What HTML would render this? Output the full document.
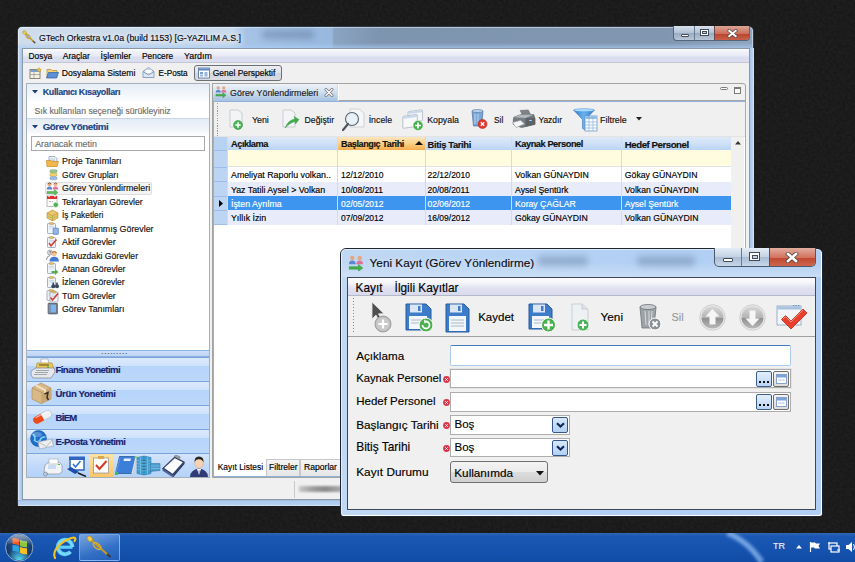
<!DOCTYPE html>
<html><head><meta charset="utf-8">
<style>
*{margin:0;padding:0;box-sizing:border-box}
html,body{width:855px;height:562px;overflow:hidden}
body{background:#151515;font-family:"Liberation Sans",sans-serif;font-size:8.7px;color:#000;position:relative}
.a{position:absolute}
.t{position:absolute;white-space:nowrap;line-height:1;-webkit-text-stroke:0.15px currentColor}
</style></head><body>
<svg class="a" style="left:0;top:0" width="855" height="533"><filter id="nz" x="0" y="0" width="100%" height="100%"><feTurbulence type="fractalNoise" baseFrequency="0.35" numOctaves="2" seed="3"/><feColorMatrix type="matrix" values="0 0 0 0 0.5  0 0 0 0 0.5  0 0 0 0 0.5  0 0 0 .08 0"/></filter><rect width="855" height="533" filter="url(#nz)"/></svg>
<!-- ============ MAIN WINDOW ============ -->
<div class="a" style="left:17px;top:26px;width:737px;height:480px;border-radius:5px 5px 2px 2px;border:1px solid #2e3846;background:linear-gradient(90deg,#cfdcea 0px,#c8d9ec 215px,#a6c3e6 228px,#98b8de 314px,#8aa4c2 316px,#7e95b0 360px,#8197b1 650px,#90a6bf 737px)"></div>
<div class="a" style="left:18px;top:27px;width:735px;height:478px;border-radius:4px 4px 1px 1px;border:1px solid rgba(255,255,255,.45);border-bottom-color:rgba(255,255,255,.8)"></div>
<div class="a" style="left:18px;top:43px;width:735px;height:5px;background:linear-gradient(180deg,rgba(170,205,245,0),rgba(170,205,245,.65))"></div>
<div class="a" style="left:18px;top:48px;width:5px;height:457px;background:linear-gradient(90deg,#e6effa,#b6d1f1 35%,#a7c6ed 80%,#9ab6da)"></div>
<div class="a" style="left:749px;top:48px;width:5px;height:457px;background:linear-gradient(90deg,#8ea9cc,#a7c4ea 25%,#b6d1f1 70%,#dfeaf7)"></div>
<div class="a" style="left:18px;top:500px;width:736px;height:5.5px;background:linear-gradient(180deg,#9ab6da,#b2cff1 30%,#aecbf0 70%,#dfeaf7)"></div>
<div class="a" style="left:262px;top:30px;width:52px;height:9px;background:rgba(40,60,90,.25);filter:blur(3px);border-radius:4px"></div>
<!-- title icon: trumpet -->
<svg class="a" style="left:22px;top:30px" width="14" height="14" viewBox="0 0 14 14"><path d="M2.5 2.5L11.5 11.5" stroke="#c49a20" stroke-width="1.5"/><ellipse cx="6" cy="6.5" rx="2.6" ry="1.5" transform="rotate(45 6 6.5)" fill="#9ca8d8" stroke="#d2a92c" stroke-width="1"/><ellipse cx="2.6" cy="2.6" rx="2" ry="1.6" transform="rotate(45 2.6 2.6)" fill="#f0cf48" stroke="#a88418" stroke-width=".5"/><path d="M11 11l2.3 2.3" stroke="#555" stroke-width="1.6"/></svg>
<div class="t" style="left:39px;top:33.5px;font-size:8.75px;color:#0b0b14;text-shadow:0 0 4px #fff,0 0 7px rgba(255,255,255,.8)">GTech Orkestra v1.0a (build 1153) [G-YAZILIM A.S.]</div>
<!-- caption buttons -->
<div class="a" style="left:673px;top:26px;width:77px;height:15px;border:1px solid #55657a;border-top:none;border-radius:0 0 4px 4px;overflow:hidden;background:linear-gradient(180deg,#d8e2ee,#b2c1d3 50%,#9aaabf 51%,#b8c6d8)">
  <div class="a" style="left:20px;top:0;width:1px;height:15px;background:#6a7a90"></div>
  <div class="a" style="left:40px;top:0;width:37px;height:15px;background:linear-gradient(180deg,#dba597,#cd6f5c 50%,#b9432c 51%,#c9654e)"></div>
  <div class="a" style="left:40px;top:0;width:1px;height:15px;background:#6a4a48"></div>
</div>
<div class="a" style="left:681px;top:34px;width:8px;height:3px;background:#fff;border:1px solid #414b5a;border-radius:1px"></div>
<div class="a" style="left:700px;top:29px;width:9px;height:7px;border:1px solid #414b5a;background:#fff"></div>
<div class="a" style="left:702px;top:31px;width:5px;height:3px;border:1px solid #414b5a;background:#c9d3df"></div>
<svg class="a" style="left:727px;top:29px" width="11" height="9" viewBox="0 0 11 9"><path d="M2.3 1.8 L8.7 7.2 M8.7 1.8 L2.3 7.2" stroke="#5a4a48" stroke-width="3.4" stroke-linecap="square"/><path d="M2.3 1.8 L8.7 7.2 M8.7 1.8 L2.3 7.2" stroke="#fff" stroke-width="2" stroke-linecap="square"/></svg>

<!-- client -->
<div class="a" style="left:22px;top:48px;width:728px;height:452px;background:#f0f0f0;border:1px solid #8b98a8"></div>
<!-- menubar -->
<div class="a" style="left:23px;top:49px;width:726px;height:13.5px;background:linear-gradient(180deg,#ffffff 0,#f1f3f9 15%,#e9ecf6 45%,#dadeef 60%,#dadef0 100%)"></div>
<div class="a" style="left:23px;top:62px;width:726px;height:1px;background:#c3c7d3"></div>
<div class="t" style="left:28.5px;top:52.2px;font-size:8.4px">Dosya</div>
<div class="t" style="left:62.7px;top:52.2px;font-size:8.6px">Araçlar</div>
<div class="t" style="left:100.5px;top:52.2px;font-size:8.8px">İşlemler</div>
<div class="t" style="left:142px;top:52.2px;font-size:8.4px">Pencere</div>
<div class="t" style="left:184px;top:52.2px;font-size:8.85px">Yardım</div>

<!-- toolbar -->
<svg class="a" style="left:29px;top:67px" width="13" height="13" viewBox="0 0 13 13"><rect x="1" y="2.5" width="10" height="9" fill="#f4f1e6" stroke="#6f6a5c" stroke-width=".8"/><rect x="1.5" y="3" width="9" height="2" fill="#7a9ed4"/><path d="M1 7.5h10M5 5v6.5" stroke="#8a846f" stroke-width=".6"/><path d="M10 0.5l.7 1.6 1.6.2-1.2 1 .4 1.6-1.5-.9-1.5.9.4-1.6-1.2-1 1.6-.2z" fill="#f2c94c" stroke="#b88a10" stroke-width=".4"/></svg>
<svg class="a" style="left:46px;top:67px" width="13" height="12" viewBox="0 0 13 12"><path d="M1 2.5h4l1 1h5v7H1z" fill="#f3d27a" stroke="#b88d2a" stroke-width=".7"/><path d="M2.5 5.5h10l-2 5.5H0.5z" fill="#5b8fd8" stroke="#2f5fa8" stroke-width=".7"/></svg>
<div class="t" style="left:61.8px;top:69.3px;font-size:8.6px">Dosyalama Sistemi</div>
<svg class="a" style="left:142px;top:66px" width="13" height="13" viewBox="0 0 13 13"><path d="M1 5.5 L6.5 1.5 L12 5.5 V11.5 H1Z" fill="#dfe9f5" stroke="#6f8fb8" stroke-width=".8"/><rect x="3" y="3.5" width="7" height="4" fill="#fff" stroke="#9ab" stroke-width=".4"/><path d="M1 5.5 L6.5 9 L12 5.5" fill="none" stroke="#6f8fb8" stroke-width=".8"/></svg>
<div class="t" style="left:158.5px;top:69.9px;font-size:8.21px">E-Posta</div>
<div class="a" style="left:194px;top:65px;width:88px;height:16px;border:1px solid #6b6f76;border-radius:3px;background:linear-gradient(180deg,#eceef2,#dfe2e8 50%,#d2d6dd 51%,#d9dce2)"></div>
<svg class="a" style="left:198px;top:67px" width="12" height="12" viewBox="0 0 12 12"><rect x=".5" y="1" width="11" height="10" fill="#fff" stroke="#4b6a9a" stroke-width=".8"/><rect x="1" y="1.5" width="10" height="2" fill="#5a86c8"/><rect x="2" y="5" width="3" height="2" fill="#7ba0d6"/><rect x="6.5" y="5" width="3" height="4.5" fill="#9bb6de"/><rect x="2" y="7.5" width="3" height="2" fill="#9bb6de"/></svg>
<div class="t" style="left:212.7px;top:69.3px;font-size:8.48px">Genel Perspektif</div>
<!-- ============ LEFT PANEL ============ -->
<div class="a" style="left:26px;top:83px;width:184px;height:395px;background:#fff;border:1px solid #a7afb9"></div>
<div class="a" style="left:27px;top:84px;width:182px;height:19px;background:linear-gradient(180deg,#e6edf6,#f6f9fc 70%,#fff)"></div>
<svg class="a" style="left:32px;top:90px" width="6" height="4" viewBox="0 0 6 4"><path d="M0 0H6L3 3.5Z" fill="#1d3d73"/></svg>
<div class="t" style="left:42.7px;top:88.11px;font-size:8.965px;letter-spacing:-0.367px;font-weight:bold;color:#1d4586">Kullanıcı Kısayolları</div>
<div class="t" style="left:34.5px;top:106.6px;font-size:8.67px;color:#6e6e6e">Sık kullanılan seçeneği sürükleyiniz</div>
<div class="a" style="left:27px;top:118px;width:182px;height:1px;background:#c7d5e6"></div>
<div class="a" style="left:27px;top:119px;width:182px;height:17px;background:linear-gradient(180deg,#e3ebf5,#f3f6fb 70%,#fff)"></div>
<svg class="a" style="left:32px;top:125px" width="6" height="4" viewBox="0 0 6 4"><path d="M0 0H6L3 3.5Z" fill="#1d3d73"/></svg>
<div class="t" style="left:42.7px;top:121.85px;font-size:9.790px;letter-spacing:-0.469px;font-weight:bold;color:#1d4586">Görev Yönetimi</div>
<div class="a" style="left:31px;top:136px;width:174px;height:15px;background:#fff;border:1px solid #a9a9a9"></div>
<div class="t" style="left:35.2px;top:140px;font-size:8.9px;color:#6d6d6d">Aranacak metin</div>

<!-- selected tree item -->
<div class="a" style="left:45px;top:181.5px;width:107px;height:13px;background:#f3f3f3;border:1px solid #dedede;border-radius:2px"></div>
<div class="t" style="left:62px;top:157.4px;font-size:8.9px;color:#111">Proje Tanımları</div>
<div class="t" style="left:62px;top:170.8px;font-size:8.56px;color:#111">Görev Grupları</div>
<div class="t" style="left:62px;top:184.2px;font-size:8.88px;color:#111">Görev Yönlendirmeleri</div>
<div class="t" style="left:62px;top:197.7px;font-size:8.7px;color:#111">Tekrarlayan Görevler</div>
<div class="t" style="left:62px;top:211.1px;font-size:8.37px;color:#111">İş Paketleri</div>
<div class="t" style="left:62px;top:224.6px;font-size:8.87px;color:#111">Tamamlanmış Görevler</div>
<div class="t" style="left:62px;top:238.0px;font-size:8.88px;color:#111">Aktif Görevler</div>
<div class="t" style="left:62px;top:251.5px;font-size:8.66px;color:#111">Havuzdaki Görevler</div>
<div class="t" style="left:62px;top:264.9px;font-size:8.73px;color:#111">Atanan Görevler</div>
<div class="t" style="left:62px;top:278.4px;font-size:8.55px;color:#111">İzlenen Görevler</div>
<div class="t" style="left:62px;top:291.8px;font-size:8.8px;color:#111">Tüm Görevler</div>
<div class="t" style="left:62px;top:305.3px;font-size:8.81px;color:#111">Görev Tanımları</div>

<!-- tree icons -->
<svg class="a" style="left:46px;top:155px" width="13" height="12" viewBox="0 0 13 12"><path d="M3 1.5h6l2 2v5H3z" fill="#eef2f7" stroke="#7f93ad" stroke-width=".7"/><path d="M4 4h5M4 5.5h5" stroke="#9fb0c6" stroke-width=".6"/><path d="M0.5 5.5h4l1 1h7l-1.5 5h-10z" fill="#f2b84b" stroke="#c98a1c" stroke-width=".7"/></svg>
<svg class="a" style="left:48.5px;top:169px" width="9" height="12" viewBox="0 0 9 12"><rect x="1" y="0.8" width="7" height="3" rx="1.2" fill="#9cc78a" stroke="#6f9a5e" stroke-width=".5"/><rect x="1" y="4.3" width="7" height="3" rx="1.2" fill="#f0d273" stroke="#b89a3a" stroke-width=".5"/><rect x="1" y="7.8" width="7" height="3" rx="1.2" fill="#9fbde6" stroke="#6d8fbf" stroke-width=".5"/></svg>
<svg class="a" style="left:46px;top:182px" width="13" height="13" viewBox="0 0 13 13"><circle cx="3.5" cy="2.5" r="1.8" fill="#e6a77e"/><path d="M1.7 1.8q1.8-1.8 3.6 0" stroke="#7a4a2a" stroke-width=".9" fill="none"/><path d="M0.8 7.5q0-3 2.7-3t2.7 3z" fill="#5c86d4"/><circle cx="9.5" cy="2.5" r="1.8" fill="#f0b090"/><path d="M7.7 1.8q1.8-1.8 3.6 0" stroke="#9a5a3a" stroke-width=".9" fill="none"/><path d="M6.8 7.5q0-3 2.7-3t2.7 3z" fill="#e2719a"/><path d="M1 9.5h7.5v-1.8l3.5 2.8-3.5 2.8v-1.8H1z" fill="#5cbc5a" stroke="#2e8a33" stroke-width=".4"/></svg>
<svg class="a" style="left:46px;top:195px" width="13" height="13" viewBox="0 0 13 13"><rect x="1" y="1" width="10" height="10.5" fill="#fff" stroke="#8a8a8a" stroke-width=".6"/><rect x="1" y="1" width="10" height="3" fill="#e0312e"/><rect x="2.5" y=".3" width="1.2" height="1.8" fill="#fff"/><rect x="8.3" y=".3" width="1.2" height="1.8" fill="#fff"/><path d="M3 6.5h2M6 6.5h1" stroke="#aaa" stroke-width=".8"/><circle cx="9.8" cy="9.8" r="2.6" fill="#4bb04f" stroke="#fff" stroke-width=".6"/></svg>
<svg class="a" style="left:45.5px;top:209px" width="13" height="12" viewBox="0 0 13 12"><path d="M1 4l5.5-3 5.5 3v5l-5.5 3-5.5-3z" fill="#e8c66a" stroke="#b68c2c" stroke-width=".6"/><path d="M1 4l5.5 3 5.5-3M6.5 7v5" stroke="#b68c2c" stroke-width=".6" fill="none"/><path d="M1 6.5l5.5 3 5.5-3" stroke="#9fc05a" stroke-width="1" fill="none"/></svg>
<svg class="a" style="left:46px;top:222px" width="13" height="13" viewBox="0 0 13 13"><rect x="1.5" y="1.5" width="8" height="10" rx=".8" fill="#eef4fb" stroke="#7f93ad" stroke-width=".7"/><rect x="3.5" y=".6" width="4" height="2" rx=".5" fill="#e3c06a" stroke="#a9883a" stroke-width=".4"/><path d="M3 4.5h5M3 6h5" stroke="#b6c6da" stroke-width=".6"/><rect x="7" y="6" width="5.5" height="6.5" rx="1" fill="#86acdf" stroke="#4c77b8" stroke-width=".5"/><path d="M8 8h3.5M8 10h3.5" stroke="#c8dcf4" stroke-width=".5"/></svg>
<svg class="a" style="left:46px;top:236px" width="13" height="12" viewBox="0 0 13 12"><rect x="1.5" y="1.5" width="8" height="10" rx=".8" fill="#eef4fb" stroke="#7f93ad" stroke-width=".7"/><rect x="3.5" y=".6" width="4" height="2" rx=".5" fill="#e3c06a" stroke="#a9883a" stroke-width=".4"/><path d="M3 4.5h5M3 6h5" stroke="#b6c6da" stroke-width=".6"/><path d="M3 7l2 2.8 5.5-6.3" stroke="#d63a2a" stroke-width="1.5" fill="none"/></svg>
<svg class="a" style="left:45.5px;top:249px" width="13" height="13" viewBox="0 0 13 13"><circle cx="4" cy="3.5" r="2.6" fill="#d6d9de" stroke="#7b8087" stroke-width=".5"/><path d="M3.2 2.6q.8-.9 1.6 0q0 .9-.8 1.2v.6" stroke="#555" stroke-width=".6" fill="none"/><path d="M0.5 11q0-4 3.5-4.5" stroke="#8b9097" stroke-width="1" fill="none"/><circle cx="8.2" cy="5" r="2.4" fill="#f3c29a"/><path d="M5.8 4.2q2.4-3 4.8 0" stroke="#c8722a" stroke-width="1.2" fill="none"/><path d="M3.5 12.5q0-4.8 4.7-4.8t4.7 4.8z" fill="#3f7bd4"/></svg>
<svg class="a" style="left:46px;top:262px" width="13" height="13" viewBox="0 0 13 13"><rect x="1.5" y="1.5" width="8" height="10" rx=".8" fill="#eef4fb" stroke="#7f93ad" stroke-width=".7"/><rect x="3.5" y=".6" width="4" height="2" rx=".5" fill="#e3c06a" stroke="#a9883a" stroke-width=".4"/><path d="M3 4.5h5M3 6h5" stroke="#b6c6da" stroke-width=".6"/><path d="M5.5 9h3.5v-2l3.5 3-3.5 3v-2H5.5z" fill="#52b04e"/></svg>
<svg class="a" style="left:46px;top:276px" width="13" height="13" viewBox="0 0 13 13"><rect x="1.5" y="1.5" width="8" height="10" rx=".8" fill="#eef4fb" stroke="#7f93ad" stroke-width=".7"/><rect x="3.5" y=".6" width="4" height="2" rx=".5" fill="#e3c06a" stroke="#a9883a" stroke-width=".4"/><path d="M3 4.5h5M3 6h5" stroke="#b6c6da" stroke-width=".6"/><circle cx="7.3" cy="10.3" r="2" fill="#3b4a5c"/><circle cx="11" cy="10.3" r="2" fill="#3b4a5c"/><rect x="6.5" y="6.5" width="1.6" height="3.5" fill="#3b4a5c"/><rect x="10.2" y="6.5" width="1.6" height="3.5" fill="#3b4a5c"/></svg>
<svg class="a" style="left:46px;top:289px" width="13" height="13" viewBox="0 0 13 13"><g transform="translate(-.5 0)"><rect x="1.5" y="1.5" width="8" height="10" rx=".8" fill="#eef4fb" stroke="#7f93ad" stroke-width=".7"/><rect x="3.5" y=".6" width="4" height="2" rx=".5" fill="#e3c06a" stroke="#a9883a" stroke-width=".4"/><path d="M3 4.5h5M3 6h5" stroke="#b6c6da" stroke-width=".6"/></g><g transform="translate(2.5 1.5)"><rect x="1.5" y="1.5" width="8" height="10" rx=".8" fill="#eef4fb" stroke="#7f93ad" stroke-width=".7"/><rect x="3.5" y=".6" width="4" height="2" rx=".5" fill="#e3c06a" stroke="#a9883a" stroke-width=".4"/><path d="M3 4.5h5M3 6h5" stroke="#b6c6da" stroke-width=".6"/></g><path d="M4.5 8.5l2 2.5 5.5-6.5" stroke="#d63a2a" stroke-width="1.5" fill="none"/></svg>
<svg class="a" style="left:46.5px;top:302px" width="12" height="13" viewBox="0 0 12 13"><rect x="1" y="1" width="9.5" height="11" rx="1" fill="#6f7a88" stroke="#4a5360" stroke-width=".6"/><rect x="3.5" y="2.5" width="5.5" height="8" rx=".5" fill="#7fb2ee"/><path d="M2.2 2v9" stroke="#9aa3ae" stroke-width=".8"/></svg>

<!-- splitter + bands -->
<div class="a" style="left:27px;top:350px;width:182px;height:7px;background:linear-gradient(180deg,#8fb1df 0,#8fb1df 1px,#cfe0f6 1px,#bcd4f3 6px,#8fb1df 6px)"></div>
<div class="t" style="left:101px;top:350px;font-size:8px;letter-spacing:0.3px;color:#4a5c78">·········</div>
<div class="a" style="left:27px;top:357px;width:182px;height:121px;background:repeating-linear-gradient(180deg,#7aa3dc 0px,#7aa3dc 1px,#dbe9fb 1px,#cfe2fb 9px,#b6d5fb 9px,#bcd8fa 24px)"></div>
<div class="a" style="left:27px;top:453px;width:182px;height:24px;background:linear-gradient(180deg,#7aa3dc 0,#7aa3dc 1px,#d4e5fa 1px,#c2dafa 12px,#b4d2f8 24px)"></div>
<div class="a" style="left:26px;top:477px;width:184px;height:1px;background:#a7afb9"></div>
<div class="t" style="left:55.5px;top:365.2px;font-size:9.6px;letter-spacing:-0.577px;font-weight:bold;color:#1a2470">Finans Yonetimi</div>
<div class="t" style="left:55.5px;top:389.2px;font-size:9.6px;letter-spacing:-0.355px;font-weight:bold;color:#1a2470">Ürün Yonetimi</div>
<div class="t" style="left:55.5px;top:413.3px;font-size:9.6px;letter-spacing:-0.72px;font-weight:bold;color:#1a2470">BİEM</div>
<div class="t" style="left:55.5px;top:437.3px;font-size:9.6px;letter-spacing:-0.548px;font-weight:bold;color:#1a2470">E-Posta Yönetimi</div>
<!-- band icons -->
<svg class="a" style="left:30px;top:358px" width="25" height="21" viewBox="0 0 25 21"><path d="M11 1h7l1 5h-8z" fill="#fafafa" stroke="#9a9a9a" stroke-width=".6"/><path d="M7 5h15l2 6H6z" fill="#e8c75a" stroke="#a98a2e" stroke-width=".6"/><path d="M9 7h10" stroke="#5a4a20" stroke-width="1"/><path d="M1 13l5-3h18l1 4-4 6H3l-2-3z" fill="#e6e8eb" stroke="#7b828a" stroke-width=".7"/><path d="M6 12.5h13M5 14.5h13M4 16.5h13" stroke="#8e959c" stroke-width=".8"/><rect x="17" y="8.5" width="2" height="1.2" fill="#3ca03c"/></svg>
<svg class="a" style="left:31px;top:382px" width="21" height="22" viewBox="0 0 21 22"><path d="M1 6l9-5 10 5v11l-10 4.5-9-4.5z" fill="#d9b985" stroke="#a88752" stroke-width=".6"/><path d="M1 6l10 4.5 9-4.5M11 10.5V21.5" stroke="#a88752" stroke-width=".6" fill="none"/><path d="M11 10.5l9-4.5v11l-9 4.5z" fill="#c9a672"/><path d="M5 3.5l9 4.5v3" stroke="#f1e1c2" stroke-width="2" fill="none"/><path d="M13.5 12l3.5-1.5-1 5 1.5 2.5" stroke="#3a3024" stroke-width="1.5" fill="none"/></svg>
<svg class="a" style="left:32px;top:409px" width="21" height="16" viewBox="0 0 21 16"><g transform="rotate(-28 10.5 8)"><rect x="0.5" y="4.3" width="20" height="7.4" rx="3.7" fill="#eef0f4" stroke="#aab0ba" stroke-width=".5"/><path d="M4.2 4.3h6.3v7.4H4.2a3.7 3.7 0 0 1 0-7.4z" fill="#ea4a1c"/><path d="M4 5.5h14" stroke="rgba(255,255,255,.6)" stroke-width="1.2"/></g></svg>
<svg class="a" style="left:30px;top:430px" width="24" height="21" viewBox="0 0 24 21"><circle cx="8.5" cy="8.5" r="8" fill="#1f6fc8"/><circle cx="8.5" cy="8.5" r="8" fill="none" stroke="#0e4a94" stroke-width=".5"/><path d="M3 4q3 3 1.5 6.5q3 2.5 5.5 0q1-4 5.5-3.5" stroke="#7fd0f8" stroke-width="1.6" fill="none"/><ellipse cx="7" cy="4.5" rx="5" ry="2.5" fill="rgba(255,255,255,.25)"/><path d="M8 12l14-3 1.5 7-14 3z" fill="#eceef1" stroke="#9aa0a8" stroke-width=".6"/><path d="M8 12l8.5 4.5 6.5-7.5" stroke="#9aa0a8" stroke-width=".6" fill="none"/></svg>
<!-- icon bar -->
<div class="a" style="left:90px;top:454px;width:23.5px;height:23px;background:linear-gradient(180deg,#fde3a4,#f9c66a)"></div>
<svg class="a" style="left:40px;top:455px" width="172" height="22" viewBox="0 0 172 22">
 <g transform="translate(1 0)"><path d="M4 10l4-3h10l3 3v7l-3 2H6l-3-2z" fill="#f1f3f6" stroke="#8e949c" stroke-width=".7"/><rect x="8" y="4" width="9" height="5" fill="#fff" stroke="#a3a9b0" stroke-width=".6"/><rect x="7" y="10" width="8" height="4" fill="#c9dcf3"/><rect x="17" y="9" width="2" height="1" fill="#3c3"/><circle cx="4.5" cy="19" r="2" fill="none" stroke="#7c8289" stroke-width=".7"/></g>
 <g transform="translate(27 0)"><path d="M3 3h14v12H3z" fill="#fff" stroke="#2c5eb2" stroke-width="1.4"/><rect x="2" y="1.5" width="16" height="3.5" fill="#2f66c4"/><path d="M6 9l2.5 3 5-6" stroke="#2f7ad8" stroke-width="1.6" fill="none"/><path d="M0 14l8 5 4-2-8-5z" fill="#1c4fa8"/><path d="M11 18l8 3.5" stroke="#1a1a1a" stroke-width="1.4"/></g>
 <g transform="translate(52 0)"><rect x="1.5" y="3" width="15" height="15" fill="#fff" stroke="#8a8a8a" stroke-width=".7"/><rect x="6" y="1" width="6" height="3" fill="#d8a94a"/><path d="M4 10l3.5 4 7-8" stroke="#d93a26" stroke-width="2" fill="none"/></g>
 <g><path d="M79.5 1.5H95.5L91.5 18.5H75.5z" fill="#3b7fd8" stroke="#1f4f9a" stroke-width=".7"/><path d="M95.5 1.5l1.2.8-4 16.9-1.2-.7z" fill="#f4f6f8" stroke="#9aa" stroke-width=".4"/><path d="M84 3.5h7l-.6 2.5h-7z" fill="#e8f0fa"/><path d="M80 3l-4 15" stroke="#6aa0e8" stroke-width=".8"/><rect x="75" y="17" width="3" height="3" fill="#3cc44a"/><rect x="94.5" y="1" width="2" height="2" fill="#7ad06a"/></g>
 <g><path d="M97 2.5l7-1.5 7 1.5v16l-7 1.5-7-1.5z" fill="#3f9fd4" stroke="#2a6f9a" stroke-width=".5"/><path d="M104 1v19" stroke="#2a78a8" stroke-width=".6"/><path d="M97 5.5l7 0.5 7-.5M97 8.5l7 .5 7-.5M97 11.5l7 .5 7-.5M97 14.5l7 .5 7-.5M100.5 2v17M107.5 2v17" stroke="#a6dcf4" stroke-width=".45"/><path d="M110.5 8.5h9.5v7l-9.5 1z" fill="#4a9ccc" stroke="#2a6f9a" stroke-width=".5"/><path d="M110.5 11h9.5M110.5 13.5h9.5" stroke="#a6dcf4" stroke-width=".45"/></g>
 <g><path d="M122.5 13.5L134.5 2 144.5 7 133 20.5z" fill="#34456e" stroke="#1c2436" stroke-width=".6"/><path d="M122.5 13.5v2.2L133 22.5v-2z" fill="#4c64a0"/><path d="M133 20.5v2L144.5 9v-2z" fill="#2b3a60"/><path d="M124.2 13L134.8 3.2l8 4.1-10.2 11.5z" fill="#fdfdfd"/><path d="M134 1.2l2.3-1.2 4 2-1.2 2.2z" fill="#9aa0a8" stroke="#555" stroke-width=".4"/></g>
 <g><path d="M150 22q0-7 9-8.5q9 1.5 9 8.5z" fill="#2f3a78"/><path d="M157 14l2 6 2-6z" fill="#fff"/><path d="M158.6 15.5l.4 5 .5-5z" fill="#3a3f55"/><ellipse cx="159" cy="8" rx="4.3" ry="5.2" fill="#f6d2b4" stroke="#c99a78" stroke-width=".4"/><path d="M154.6 7.5q-.5-6 4.4-6t4.6 6q-1-3-4.5-3.2t-4.5 3.2z" fill="#2a2420"/></g>
</svg>
<!-- ============ EDITOR PANEL ============ -->
<div class="a" style="left:212px;top:83px;width:534px;height:394.5px;background:#f0f0f0;border:1px solid #a3a3a3;border-radius:0 3px 0 0"></div>
<div class="a" style="left:337.5px;top:84px;width:407px;height:16.5px;border-left:1px solid #fff;border-bottom:1px solid #a8a8a8"></div>
<!-- tab -->
<div class="a" style="left:212px;top:83px;width:125.5px;height:18px;background:linear-gradient(180deg,#eef3f9,#d9e5f2 35%,#b9cfe8 75%,#a6c1e1);border:1px solid #a3a3a3;border-bottom:none;border-right-color:#d8d8d8;border-radius:0 2px 0 0"></div>
<svg class="a" style="left:215px;top:85px" width="12" height="13" viewBox="0 0 13 13"><circle cx="3.5" cy="2.5" r="1.8" fill="#e6a77e"/><path d="M0.8 7.5q0-3 2.7-3t2.7 3z" fill="#5c86d4"/><circle cx="9.5" cy="2.5" r="1.8" fill="#e6a77e"/><path d="M6.8 7.5q0-3 2.7-3t2.7 3z" fill="#e2719a"/><path d="M1 9.5h7.5v-1.8l3.5 2.8-3.5 2.8v-1.8H1z" fill="#46b04a" stroke="#2e8a33" stroke-width=".4"/></svg>
<div class="t" style="left:230.1px;top:88.6px;font-size:8.9px;color:#1a1a1a">Görev Yönlendirmeleri</div>
<svg class="a" style="left:323.5px;top:87.5px" width="10" height="9" viewBox="0 0 10 9"><path d="M2 1.5L8 7.5M8 1.5L2 7.5" stroke="#6e6e6e" stroke-width="2.8" stroke-linecap="round"/><path d="M2 1.5L8 7.5M8 1.5L2 7.5" stroke="#fafafa" stroke-width="1.5" stroke-linecap="round"/></svg>
<!-- min/max -->
<div class="a" style="left:720px;top:86.5px;width:8px;height:3.5px;border:1px solid #7b7b7b;border-radius:2px;background:#fafafa"></div>
<div class="a" style="left:733.5px;top:86.5px;width:7.5px;height:7.5px;border:1px solid #7b7b7b;border-top-width:2px;background:#fff"></div>
<!-- content frame -->
<div class="a" style="left:213px;top:101px;width:532.5px;height:375.5px;border:1px solid #8fb1da;background:#fff"></div>
<div class="a" style="left:214px;top:102px;width:530.5px;height:34.5px;background:#f0f0f0;border-bottom:1px solid #e3e3e3"></div>
<div class="a" style="left:217.3px;top:103px;width:1px;height:33px;background:repeating-linear-gradient(180deg,#9a9a9a 0,#9a9a9a 1px,transparent 1px,transparent 2.5px)"></div>
<!-- toolbar items -->
<svg class="a" style="left:229px;top:109px" width="15" height="22" viewBox="0 0 15 22"><path d="M1 1h8l4 3v14H1z" fill="#f2f4f6" stroke="#b8bec6" stroke-width=".7"/><circle cx="9" cy="16" r="4.5" fill="#4db35a" stroke="#2d8a38" stroke-width=".5"/><path d="M9 13.3v5.4M6.3 16h5.4" stroke="#fff" stroke-width="1.5"/></svg>
<div class="t" style="left:251.9px;top:115.5px;font-size:8.9px;color:#111">Yeni</div>
<svg class="a" style="left:282px;top:109px" width="18" height="22" viewBox="0 0 18 22"><path d="M1 1h8l4 3v14H1z" fill="#f2f4f6" stroke="#b8bec6" stroke-width=".7"/><path d="M3 19q3-8 10-9l-1-2.5 5 3-3.5 4.5-.5-2.5q-5 1-10 6.5z" fill="#3fae49" stroke="#2a8a34" stroke-width=".4"/></svg>
<div class="t" style="left:304.6px;top:115.5px;font-size:8.7px;color:#111">Değiştir</div>
<svg class="a" style="left:342px;top:108px" width="23" height="24" viewBox="0 0 23 24"><path d="M8 1h9l5 4v14H8z" fill="#f5f6f8" stroke="#bfc3c8" stroke-width=".7"/><circle cx="10" cy="11" r="6.5" fill="#e8f0f8" stroke="#5a6470" stroke-width="1.1"/><path d="M6 16l-5 6" stroke="#4d5560" stroke-width="2.2" stroke-linecap="round"/></svg>
<div class="t" style="left:368.7px;top:115.5px;font-size:8.77px;color:#111">İncele</div>
<svg class="a" style="left:402px;top:108px" width="23" height="24" viewBox="0 0 23 24"><g transform="skewY(-8)"><rect x="6" y="4.5" width="14.5" height="11" rx="1" fill="#f4f6f9" stroke="#a9b3be" stroke-width=".7"/><rect x="6.5" y="5" width="13.5" height="2" fill="#c6d8ec"/><rect x="0.8" y="8.5" width="14.5" height="12" rx="1" fill="#f7f8fa" stroke="#a3adb8" stroke-width=".7"/><rect x="1.3" y="9" width="13.5" height="2" fill="#c6d8ec"/></g><circle cx="16" cy="17.5" r="5" fill="#43b04c" stroke="#e8f5e8" stroke-width=".6"/><path d="M16 14.6v5.8M13.1 17.5h5.8" stroke="#fff" stroke-width="1.7"/></svg>
<div class="t" style="left:427.2px;top:115.5px;font-size:8.8px;color:#111">Kopyala</div>
<svg class="a" style="left:470px;top:108px" width="18" height="22" viewBox="0 0 18 22"><path d="M2 3h11l-1.5 15h-8z" fill="#7aa6d8" stroke="#4c6f9a" stroke-width=".7"/><ellipse cx="7.5" cy="3" rx="5.5" ry="1.5" fill="#b9d4ef" stroke="#4c6f9a" stroke-width=".6"/><path d="M5 6v10M8 6v10" stroke="#cfe2f6" stroke-width=".8"/><circle cx="12.5" cy="16" r="4.5" fill="#e23a2e" stroke="#a91f18" stroke-width=".5"/><path d="M10.8 14.3l3.4 3.4M14.2 14.3l-3.4 3.4" stroke="#fff" stroke-width="1.3"/></svg>
<div class="t" style="left:494px;top:115.5px;font-size:8.37px;color:#111">Sil</div>
<svg class="a" style="left:512px;top:109px" width="23.5" height="20" viewBox="0 0 26 22"><path d="M9 1.5l9-.5 3 6-9 .5z" fill="#7c8288" stroke="#4e5358" stroke-width=".5"/><path d="M2 9l8-3 14 0 1.5 5v6l-15 3.5-9-3.5v-5z" fill="#767c83" stroke="#42464b" stroke-width=".6"/><path d="M2 9l8-3 14 0-9 4z" fill="#b4b9be"/><path d="M15 10l10.5-.5v7l-10.5 3z" fill="#5c6166"/><path d="M0.5 15l9-2.5 4.5 4-9.5 4z" fill="#f6f6f6" stroke="#8d9196" stroke-width=".6"/><rect x="19" y="12" width="3" height="1.2" fill="#9fd0ff"/></svg>
<div class="t" style="left:538.4px;top:115.5px;font-size:8.45px;color:#111">Yazdır</div>
<svg class="a" style="left:573px;top:108px" width="25" height="24" viewBox="0 0 25 24"><defs><linearGradient id="fun" x1="0" x2="1"><stop offset="0" stop-color="#2f78c8"/><stop offset=".5" stop-color="#6cb4ee"/><stop offset="1" stop-color="#2f78c8"/></linearGradient></defs><path d="M0.5 2h21L12.5 11.5V22l-3-1.5V11.5z" fill="url(#fun)" stroke="#2a64a8" stroke-width=".5"/><ellipse cx="11" cy="2.2" rx="10.5" ry="1.6" fill="#a8dafa" stroke="#3f86cc" stroke-width=".4"/><rect x="12" y="8" width="12" height="15" fill="#fbfdff" stroke="#5a8cc8" stroke-width=".7"/><rect x="12.3" y="8.3" width="11.4" height="2.6" fill="#8fbbe8"/><path d="M12 14h12M12 17h12M12 20h12M16 8v15M20 8v15" stroke="#7aa8d8" stroke-width=".6"/></svg>
<div class="t" style="left:600px;top:115.5px;font-size:8.93px;color:#111">Filtrele</div>
<svg class="a" style="left:636px;top:117px" width="6" height="4" viewBox="0 0 6 4"><path d="M0 0H6L3 3.5Z" fill="#222"/></svg>

<!-- grid header -->
<div class="a" style="left:214px;top:136.7px;width:517px;height:13.5px;background:linear-gradient(180deg,#dce9f9,#cfe0f7 50%,#bad4f4)"></div>
<div class="a" style="left:337px;top:136.7px;width:87.5px;height:13.5px;background:linear-gradient(180deg,#fde6bd,#fbcf88 50%,#f6ad4c)"></div>
<div class="a" style="left:214px;top:136.7px;width:13.5px;height:88px;background:#b8d2f2"></div>
<div class="a" style="left:214px;top:150.2px;width:13.5px;height:74.5px;background:#bcd5f3"></div>
<!-- filter row -->
<div class="a" style="left:227.5px;top:150.2px;width:503.5px;height:17px;background:#fffce0;border-bottom:1px solid #dde3ec"></div>
<!-- data rows -->
<div class="a" style="left:227.5px;top:167.2px;width:503.5px;height:14.4px;background:#fff"></div>
<div class="a" style="left:227.5px;top:181.6px;width:503.5px;height:14.4px;background:#e8ecfa"></div>
<div class="a" style="left:227.5px;top:196px;width:503.5px;height:14.4px;background:#3d95f0"></div>
<div class="a" style="left:227.5px;top:210.4px;width:503.5px;height:14.2px;background:#e8ecfa"></div>
<!-- row indicator separators -->
<div class="a" style="left:214px;top:150.2px;width:13.5px;height:1px;background:#9dbde8"></div><div class="a" style="left:214px;top:166.8px;width:13.5px;height:1px;background:#9dbde8"></div><div class="a" style="left:214px;top:181.3px;width:13.5px;height:1px;background:#9dbde8"></div><div class="a" style="left:214px;top:195.7px;width:13.5px;height:1px;background:#9dbde8"></div><div class="a" style="left:214px;top:210.1px;width:13.5px;height:1px;background:#9dbde8"></div><div class="a" style="left:214px;top:224.3px;width:13.5px;height:1px;background:#9dbde8"></div>
<svg class="a" style="left:218.5px;top:199.5px" width="4" height="7" viewBox="0 0 4 7"><path d="M0 0L4 3.5L0 7Z" fill="#000"/></svg>
<!-- column lines -->
<div class="a" style="left:227.2px;top:136.7px;width:1px;height:88px;background:#d2dbe8"></div>
<div class="a" style="left:337px;top:136.7px;width:1px;height:88px;background:#d2dbe8"></div>
<div class="a" style="left:424.5px;top:136.7px;width:1px;height:88px;background:#d2dbe8"></div>
<div class="a" style="left:511.2px;top:136.7px;width:1px;height:88px;background:#d2dbe8"></div>
<div class="a" style="left:620.7px;top:136.7px;width:1px;height:88px;background:#d2dbe8"></div>
<div class="a" style="left:730.8px;top:136.7px;width:13.7px;height:321.8px;background:#f0f0f0"></div>
<svg class="a" style="left:735px;top:141px" width="6" height="4" viewBox="0 0 6 4"><path d="M0 3.5H6L3 0Z" fill="#333"/></svg>
<!-- header text -->
<div class="t" style="left:231px;top:139.79px;font-size:9.273px;letter-spacing:-0.461px;font-weight:bold;color:#111">Açıklama</div>
<div class="t" style="left:341px;top:139.80px;font-size:9.053px;letter-spacing:-0.392px;font-weight:bold;color:#111">Başlangıç Tarihi</div>
<svg class="a" style="left:415px;top:141.4px" width="8" height="4" viewBox="0 0 8 4"><path d="M0 4H8L4 0Z" fill="#111"/></svg>
<div class="t" style="left:427.5px;top:139.78px;font-size:9.394px;letter-spacing:-0.365px;font-weight:bold;color:#111">Bitiş Tarihi</div>
<div class="t" style="left:515px;top:139.79px;font-size:9.284px;letter-spacing:-0.451px;font-weight:bold;color:#111">Kaynak Personel</div>
<div class="t" style="left:624.8px;top:139.76px;font-size:9.669px;letter-spacing:-0.458px;font-weight:bold;color:#111">Hedef Personel</div>
<!-- rows text -->
<div class="t" style="left:231px;top:171.2px;font-size:8.82px">Ameliyat Raporlu volkan..</div>
<div class="t" style="left:341px;top:171.2px;font-size:8.5px">12/12/2010</div>
<div class="t" style="left:427.5px;top:171.2px;font-size:8.5px">22/12/2010</div>
<div class="t" style="left:515px;top:171.2px;font-size:8.7px">Volkan GÜNAYDIN</div>
<div class="t" style="left:624.8px;top:171.2px;font-size:8.7px">Gökay GÜNAYDIN</div>
<div class="t" style="left:231px;top:185.6px;font-size:8.8px">Yaz Tatili Aysel &gt; Volkan</div>
<div class="t" style="left:341px;top:185.6px;font-size:8.5px">10/08/2011</div>
<div class="t" style="left:427.5px;top:185.6px;font-size:8.5px">20/08/2011</div>
<div class="t" style="left:515px;top:185.6px;font-size:8.7px">Aysel Şentürk</div>
<div class="t" style="left:624.8px;top:185.6px;font-size:8.7px">Volkan GÜNAYDIN</div>
<div class="t" style="left:231px;top:200px;font-size:8.8px;color:#fff">İşten Ayrılma</div>
<div class="t" style="left:341px;top:200px;font-size:8.5px;color:#fff">02/05/2012</div>
<div class="t" style="left:427.5px;top:200px;font-size:8.5px;color:#fff">02/06/2012</div>
<div class="t" style="left:515px;top:200px;font-size:8.7px;color:#fff">Koray ÇAĞLAR</div>
<div class="t" style="left:624.8px;top:200px;font-size:8.7px;color:#fff">Aysel Şentürk</div>
<div class="t" style="left:231px;top:214.4px;font-size:8.8px">Yıllık İzin</div>
<div class="t" style="left:341px;top:214.4px;font-size:8.5px">07/09/2012</div>
<div class="t" style="left:427.5px;top:214.4px;font-size:8.5px">16/09/2012</div>
<div class="t" style="left:515px;top:214.4px;font-size:8.7px">Gökay GÜNAYDIN</div>
<div class="t" style="left:624.8px;top:214.4px;font-size:8.7px">Volkan GÜNAYDIN</div>

<!-- bottom tabs -->
<div class="a" style="left:214px;top:458.5px;width:530px;height:17px;background:#fff"></div>
<div class="a" style="left:265.5px;top:458.5px;width:34.5px;height:17px;background:linear-gradient(180deg,#f4f4f4,#e6e6e6);border:1px solid #c8c8c8;border-bottom:none"></div>
<div class="a" style="left:300px;top:458.5px;width:45px;height:17px;background:linear-gradient(180deg,#f4f4f4,#e6e6e6);border:1px solid #c8c8c8;border-bottom:none"></div>
<div class="t" style="left:217.7px;top:463.2px;font-size:8.42px">Kayıt Listesi</div>
<div class="t" style="left:269px;top:463.2px;font-size:8.6px">Filtreler</div>
<div class="t" style="left:304px;top:463.2px;font-size:8.6px">Raporlar</div>

<!-- status bar -->
<div class="a" style="left:294px;top:481px;width:1px;height:17px;background:#c8c8c8"></div>
<div class="a" style="left:299px;top:485.5px;width:44px;height:6px;background:linear-gradient(90deg,#c8c8c8,#9a9a9a 35%,#8a8a8a 60%,#b0b0b0);filter:blur(.8px)"></div>
<!-- ============ DIALOG ============ -->
<div class="a" style="left:340px;top:248px;width:483px;height:269px;border-radius:6px 6px 4px 4px;border:1px solid #1e2630;background:linear-gradient(90deg,#c0d8f3,#b6d3f5 40%,#b2d0f4 60%,#b0cff2)"></div>
<div class="a" style="left:341px;top:249px;width:481px;height:267px;border-radius:5px 5px 3px 3px;border:1px solid rgba(255,255,255,.55);border-bottom-color:#fff;border-right-color:#fff"></div>
<div class="a" style="left:341px;top:262px;width:480px;height:15px;background:linear-gradient(180deg,rgba(215,230,248,0),rgba(210,226,246,.75))"></div>
<!-- blurred shadows of grid text behind glass -->
<div class="a" style="left:538px;top:256px;width:50px;height:10px;background:rgba(60,80,110,.28);filter:blur(3px);border-radius:4px"></div>
<div class="a" style="left:637px;top:256px;width:58px;height:10px;background:rgba(60,80,110,.28);filter:blur(3px);border-radius:4px"></div>
<svg class="a" style="left:348px;top:255px" width="16" height="16" viewBox="0 0 13 13"><circle cx="3.5" cy="2.5" r="1.8" fill="#e6a77e"/><path d="M0.8 7.5q0-3 2.7-3t2.7 3z" fill="#5c86d4"/><circle cx="9.5" cy="2.5" r="1.8" fill="#e6a77e"/><path d="M6.8 7.5q0-3 2.7-3t2.7 3z" fill="#e2719a"/><path d="M1 9.5h7.5v-1.8l3.5 2.8-3.5 2.8v-1.8H1z" fill="#46b04a" stroke="#2e8a33" stroke-width=".4"/></svg>
<div class="t" style="left:369.6px;top:257.2px;font-size:11.75px;color:#0c0c10;text-shadow:0 0 5px rgba(255,255,255,.7)">Yeni Kayıt (Görev Yönlendirme)</div>
<!-- caption buttons -->
<div class="a" style="left:714px;top:248px;width:102px;height:19px;border:1px solid #4c5a6c;border-top:none;border-radius:0 0 5px 5px;overflow:hidden;background:linear-gradient(180deg,#e4ecf6,#c3d2e4 50%,#a9bcd3 51%,#c6d6ea)">
  <div class="a" style="left:26px;top:0;width:1px;height:19px;background:#6a7a90"></div>
  <div class="a" style="left:53.5px;top:0;width:48px;height:19px;background:linear-gradient(180deg,#e2ad9f,#d27360 50%,#bf4730 51%,#cf6a52)"></div>
  <div class="a" style="left:53.5px;top:0;width:1px;height:19px;background:#6a4a48"></div>
</div>
<div class="a" style="left:723px;top:258px;width:10px;height:4px;background:#fff;border:1px solid #414b5a;border-radius:1px"></div>
<div class="a" style="left:749px;top:252px;width:11px;height:9px;border:1px solid #414b5a;background:#fff"></div>
<div class="a" style="left:751.5px;top:254.5px;width:6px;height:4px;border:1px solid #414b5a;background:#c9d3df"></div>
<svg class="a" style="left:785px;top:252px" width="14" height="11" viewBox="0 0 14 11"><path d="M3 2 L11 9 M11 2 L3 9" stroke="#5a4a48" stroke-width="4.2" stroke-linecap="square"/><path d="M3 2 L11 9 M11 2 L3 9" stroke="#fff" stroke-width="2.6" stroke-linecap="square"/></svg>

<!-- client -->
<div class="a" style="left:347px;top:276.6px;width:469px;height:233px;background:#f0f0f0;border:1px solid #3c4656"></div>
<div class="a" style="left:348px;top:277.6px;width:467px;height:18.4px;background:linear-gradient(180deg,#fdfdff 0,#f4f4fa 30%,#e0e0f0 60%,#d9dbee 100%);border-bottom:1px solid #b4b8c8"></div>
<div class="t" style="left:355.6px;top:283px;font-size:11.85px">Kayıt</div>
<div class="t" style="left:394.6px;top:283px;font-size:11.87px">İlgili Kayıtlar</div>
<!-- toolbar -->
<div class="a" style="left:348px;top:336px;width:467px;height:1px;background:#a0a0a0"></div>
<div class="a" style="left:352.5px;top:298px;width:1px;height:36px;background:repeating-linear-gradient(180deg,#888 0,#888 1.2px,transparent 1.2px,transparent 3px)"></div>
<svg class="a" style="left:370px;top:301px" width="24" height="32" viewBox="0 0 24 32"><path d="M2 1v17l4-4 3 6 2.5-1.2-3-6h5.5z" fill="#505050" stroke="#e8e8e8" stroke-width=".8"/><circle cx="13" cy="23" r="8" fill="#bdbdbd" stroke="#8e8e8e" stroke-width=".8"/><circle cx="13" cy="23" r="6.6" fill="#c9c9c9"/><path d="M13 18.5v9M8.5 23h9" stroke="#fff" stroke-width="2.2"/></svg>
<svg class="a" style="left:405px;top:303px" width="30" height="30" viewBox="0 0 30 30"><path d="M1 1h20l5 5v21H1z" fill="#3d7cc8" stroke="#275a9e" stroke-width="1"/><rect x="5" y="1.5" width="12" height="8" fill="#dbe6f4"/><rect x="13" y="3" width="2.5" height="5" fill="#3d7cc8"/><rect x="4" y="13" width="18" height="13" fill="#f2f5f9"/><path d="M6 17h13M6 20h13" stroke="#9aa8b8" stroke-width=".8"/><circle cx="21" cy="22" r="7" fill="#4db04f" stroke="#fff" stroke-width="1"/><path d="M17.5 22a3.5 3.5 0 1 0 3.5-3.5" stroke="#fff" stroke-width="1.8" fill="none"/><path d="M19 16.5l3 2-2.5 2.2z" fill="#fff"/></svg>
<svg class="a" style="left:445px;top:303px" width="25" height="30" viewBox="0 0 25 30"><path d="M1 1h18l5 5v23H1z" fill="#3d7cc8" stroke="#275a9e" stroke-width="1"/><rect x="5" y="1.5" width="12" height="8" fill="#dbe6f4"/><rect x="13" y="3" width="2.5" height="5" fill="#3d7cc8"/><rect x="4" y="13" width="17" height="15" fill="#f2f5f9"/><path d="M6 17h13M6 20h13M6 23h13" stroke="#9aa8b8" stroke-width=".8"/></svg>
<div class="t" style="left:478.2px;top:311.5px;font-size:11.5px">Kaydet</div>
<svg class="a" style="left:528px;top:303px" width="30" height="30" viewBox="0 0 30 30"><path d="M1 1h18l5 5v20H1z" fill="#3d7cc8" stroke="#275a9e" stroke-width="1"/><rect x="5" y="1.5" width="12" height="8" fill="#dbe6f4"/><rect x="13" y="3" width="2.5" height="5" fill="#3d7cc8"/><rect x="4" y="13" width="17" height="12" fill="#f2f5f9"/><path d="M6 17h13M6 20h13" stroke="#9aa8b8" stroke-width=".8"/><circle cx="20.5" cy="22" r="7" fill="#4db04f" stroke="#fff" stroke-width="1"/><path d="M20.5 17.5v9M16 22h9" stroke="#fff" stroke-width="2.4"/></svg>
<svg class="a" style="left:570px;top:303px" width="22" height="30" viewBox="0 0 22 30"><path d="M2 1h10l6 5v21H2z" fill="#eef1f4" stroke="#c0c6cc" stroke-width=".8"/><path d="M12 1v5h6" fill="#dde2e8" stroke="#c0c6cc" stroke-width=".8"/><circle cx="13" cy="22" r="6" fill="#4db35a" stroke="#fff" stroke-width=".8"/><path d="M13 18.5v7M9.5 22h7" stroke="#fff" stroke-width="2"/></svg>
<div class="t" style="left:600.5px;top:311.5px;font-size:11.8px">Yeni</div>
<svg class="a" style="left:637px;top:302px" width="26" height="30" viewBox="0 0 26 30"><path d="M3 5h16l-2 21H5z" fill="#9ea3a8" stroke="#6f7479" stroke-width=".8"/><ellipse cx="11" cy="5" rx="8" ry="2.5" fill="#c9cdd1" stroke="#6f7479" stroke-width=".8"/><path d="M8 9l1 14M12 9v14M15 9l-1 14" stroke="#d8dbde" stroke-width="1"/><circle cx="18" cy="22" r="6" fill="#8c9196" stroke="#fff" stroke-width="1"/><path d="M15.5 19.5l5 5M20.5 19.5l-5 5" stroke="#fff" stroke-width="1.8"/></svg>
<div class="t" style="left:671.6px;top:311.5px;font-size:10.8px;color:#9a9a9a">Sil</div>
<svg class="a" style="left:698.5px;top:304px" width="27" height="28" viewBox="0 0 27 28"><defs><linearGradient id="cg" x1="0" y1="0" x2="0" y2="1"><stop offset="0" stop-color="#d8d8d8"/><stop offset=".5" stop-color="#b4b4b4"/><stop offset=".51" stop-color="#8e8e8e"/><stop offset="1" stop-color="#b8b8b8"/></linearGradient></defs><circle cx="13.5" cy="13.5" r="12.8" fill="#e6e6e6" stroke="#c8c8c8" stroke-width=".8"/><circle cx="13.5" cy="13.5" r="11" fill="url(#cg)"/><path d="M13.5 5l7 7.5h-4v8h-6v-8h-4z" fill="#f6f6f6"/></svg>
<svg class="a" style="left:738.5px;top:304px" width="27" height="28" viewBox="0 0 27 28"><circle cx="13.5" cy="13.5" r="12.8" fill="#e6e6e6" stroke="#c8c8c8" stroke-width=".8"/><circle cx="13.5" cy="13.5" r="11" fill="url(#cg)"/><path d="M13.5 22l7-7.5h-4v-8h-6v8h-4z" fill="#f6f6f6"/></svg>
<svg class="a" style="left:776px;top:304px" width="33" height="29" viewBox="0 0 33 29"><rect x="1" y="2" width="24" height="19" fill="#f3f5f8" stroke="#9bb0c8" stroke-width="1"/><rect x="1.5" y="2.5" width="23" height="3" fill="#a9c2e0"/><path d="M17 1.5h1.5M19.5 1.5H21M22 1.5h1.5" stroke="#6f8fb8" stroke-width="1"/><path d="M5.5 15.5l4-4 5.5 5.5 12-12 4 4-16 16z" fill="#e8402c" stroke="#c02a1a" stroke-width=".8" stroke-linejoin="round"/><path d="M7 15l2.5-2.5 5.5 5.5 12-12" stroke="#f98a78" stroke-width="1" fill="none"/></svg>

<!-- form -->
<div class="t" style="left:356.2px;top:349.8px;font-size:11.67px">Açıklama</div>
<div class="t" style="left:356.2px;top:373px;font-size:11.27px">Kaynak Personel</div>
<div class="t" style="left:356.2px;top:396px;font-size:11.53px">Hedef Personel</div>
<div class="t" style="left:356.2px;top:418.8px;font-size:11.72px">Başlangıç Tarihi</div>
<div class="t" style="left:356.2px;top:441.8px;font-size:11.92px">Bitiş Tarihi</div>
<div class="t" style="left:356.2px;top:467px;font-size:11.84px">Kayıt Durumu</div>

<div class="a" style="left:450px;top:344.8px;width:341px;height:21px;background:#fff;border:1px solid #a9cbec;border-top-color:#3f7cbf;border-radius:2px"></div>
<div class="a" style="left:450px;top:369.3px;width:341px;height:19.2px;background:#fff;border:1px solid #adadad;outline:1px solid #e4e4e4"></div>
<div class="a" style="left:450px;top:392px;width:341px;height:19.5px;background:#fff;border:1px solid #adadad"></div>
<div class="a" style="left:450px;top:415.2px;width:120px;height:19.5px;background:#fff;border:1px solid #adadad"></div>
<div class="a" style="left:450px;top:438.1px;width:120px;height:19.2px;background:#fff;border:1px solid #adadad"></div>
<div class="a" style="left:450px;top:461.3px;width:98px;height:22.2px;background:linear-gradient(180deg,#f3f3f3,#ebebeb 50%,#dddddd 51%,#cfcfcf);border:1px solid #707070;border-radius:3px"></div>
<div class="t" style="left:454.5px;top:419px;font-size:11.5px">Boş</div>
<div class="t" style="left:454.5px;top:442px;font-size:11.5px">Boş</div>
<div class="t" style="left:454.3px;top:466.8px;font-size:11.73px">Kullanımda</div>
<svg class="a" style="left:535.5px;top:470.5px" width="8" height="5" viewBox="0 0 8 5"><path d="M0 0H8L4 4.5Z" fill="#111"/></svg>
<!-- dropdown buttons -->
<div class="a" style="left:552px;top:417.3px;width:15.5px;height:15.5px;background:linear-gradient(180deg,#d6e8fb,#b2d1f4);border:1px solid #35568a;border-radius:2px"></div>
<div class="a" style="left:552px;top:440.3px;width:15.5px;height:15.5px;background:linear-gradient(180deg,#d6e8fb,#b2d1f4);border:1px solid #35568a;border-radius:2px"></div>
<svg class="a" style="left:555.5px;top:422px" width="9" height="6" viewBox="0 0 9 6"><path d="M1 1.2l3.5 3.3L8 1.2" stroke="#0f2a55" stroke-width="2.2" fill="none"/></svg>
<svg class="a" style="left:555.5px;top:445px" width="9" height="6" viewBox="0 0 9 6"><path d="M1 1.2l3.5 3.3L8 1.2" stroke="#0f2a55" stroke-width="2.2" fill="none"/></svg>
<!-- ... buttons -->
<div class="a" style="left:755.8px;top:371.2px;width:16px;height:15.6px;background:linear-gradient(180deg,#e3effc,#b9d4f3);border:1px solid #3c5f8e;border-radius:2px"></div>
<div class="a" style="left:772.7px;top:371.2px;width:16.3px;height:15.6px;background:linear-gradient(180deg,#f4f4f4,#dcdcdc);border:1px solid #6e6e6e;border-radius:2px"></div>
<div class="a" style="left:755.8px;top:394.2px;width:16px;height:15.6px;background:linear-gradient(180deg,#e3effc,#b9d4f3);border:1px solid #3c5f8e;border-radius:2px"></div>
<div class="a" style="left:772.7px;top:394.2px;width:16.3px;height:15.6px;background:linear-gradient(180deg,#f4f4f4,#dcdcdc);border:1px solid #6e6e6e;border-radius:2px"></div>
<svg class="a" style="left:757px;top:380.5px" width="14" height="3" viewBox="0 0 14 3"><rect x="2" y="0" width="2" height="2" fill="#111"/><rect x="6" y="0" width="2" height="2" fill="#111"/><rect x="10" y="0" width="2" height="2" fill="#111"/></svg>
<svg class="a" style="left:757px;top:403.5px" width="14" height="3" viewBox="0 0 14 3"><rect x="2" y="0" width="2" height="2" fill="#111"/><rect x="6" y="0" width="2" height="2" fill="#111"/><rect x="10" y="0" width="2" height="2" fill="#111"/></svg>
<svg class="a" style="left:775.5px;top:374px" width="11" height="10" viewBox="0 0 11 10"><rect x=".5" y=".5" width="10" height="9" fill="#fff" stroke="#6d8fbf" stroke-width=".8"/><rect x="1" y="1" width="9" height="2.5" fill="#7ba3d8"/><path d="M2.5 6h6" stroke="#6d8fbf" stroke-width=".8" stroke-dasharray="1 .6"/></svg>
<svg class="a" style="left:775.5px;top:397px" width="11" height="10" viewBox="0 0 11 10"><rect x=".5" y=".5" width="10" height="9" fill="#fff" stroke="#6d8fbf" stroke-width=".8"/><rect x="1" y="1" width="9" height="2.5" fill="#7ba3d8"/><path d="M2.5 6h6" stroke="#6d8fbf" stroke-width=".8" stroke-dasharray="1 .6"/></svg>
<!-- red required markers -->
<svg class="a" style="left:442.5px;top:376px" width="7" height="7" viewBox="0 0 7 7"><circle cx="3.5" cy="3.5" r="3.4" fill="#d9384a"/><path d="M2.1 2.1l2.8 2.8M4.9 2.1l-2.8 2.8" stroke="#fff" stroke-width=".8"/></svg>
<svg class="a" style="left:442.5px;top:398.6px" width="7" height="7" viewBox="0 0 7 7"><circle cx="3.5" cy="3.5" r="3.4" fill="#d9384a"/><path d="M2.1 2.1l2.8 2.8M4.9 2.1l-2.8 2.8" stroke="#fff" stroke-width=".8"/></svg>
<svg class="a" style="left:442.5px;top:421.8px" width="7" height="7" viewBox="0 0 7 7"><circle cx="3.5" cy="3.5" r="3.4" fill="#d9384a"/><path d="M2.1 2.1l2.8 2.8M4.9 2.1l-2.8 2.8" stroke="#fff" stroke-width=".8"/></svg>
<svg class="a" style="left:442.5px;top:444.5px" width="7" height="7" viewBox="0 0 7 7"><circle cx="3.5" cy="3.5" r="3.4" fill="#d9384a"/><path d="M2.1 2.1l2.8 2.8M4.9 2.1l-2.8 2.8" stroke="#fff" stroke-width=".8"/></svg>
<!-- ============ TASKBAR ============ -->
<div class="a" style="left:0;top:533px;width:855px;height:29px;background:linear-gradient(180deg,#3464a8 0,#2a62b8 1px,#1b58b4 3px,#1552ae 60%,#114ca6)"></div>
<svg class="a" style="left:700px;top:533px" width="90" height="29" viewBox="0 0 90 29"><defs><filter id="bl"><feGaussianBlur stdDeviation="1.6"/></filter></defs><path d="M27 0 Q48 8 62 29" stroke="rgba(150,195,250,.55)" stroke-width="6" fill="none" filter="url(#bl)"/><path d="M29 0 Q48 9 61 29" stroke="rgba(200,225,255,.35)" stroke-width="2" fill="none" filter="url(#bl)"/></svg>
<!-- start orb -->
<svg class="a" style="left:4px;top:533px" width="31" height="29" viewBox="0 0 31 29"><defs><radialGradient id="orb" cx="50%" cy="45%" r="55%"><stop offset="0" stop-color="#2a5f9c"/><stop offset=".75" stop-color="#173f74"/><stop offset="1" stop-color="#0f2d58"/></radialGradient><radialGradient id="orbg" cx="50%" cy="100%" r="50%"><stop offset="0" stop-color="rgba(90,235,255,.95)"/><stop offset="1" stop-color="rgba(90,235,255,0)"/></radialGradient><linearGradient id="orbh" x1="0" y1="0" x2="0" y2="1"><stop offset="0" stop-color="rgba(255,255,255,.55)"/><stop offset="1" stop-color="rgba(255,255,255,.05)"/></linearGradient></defs><circle cx="15.2" cy="14.5" r="13.6" fill="url(#orb)" stroke="rgba(190,215,240,.8)" stroke-width=".9"/><circle cx="15.2" cy="14.5" r="12.8" fill="url(#orbg)"/><g transform="translate(15 14) skewY(12) translate(-15 -14)"><path d="M8.5 6.5q3-1 6.5 0v6q-3.5-1-6.5 0z" fill="#f2561e"/><path d="M16 6.5q3.5 1 7 0v6q-3.5 1-7 0z" fill="#8cc63c"/><path d="M8.5 13.5q3-1 6.5 0v6q-3.5-1-6.5 0z" fill="#2aa2e6"/><path d="M16 13.5q3.5 1 7 0v6q-3.5 1-7 0z" fill="#fcc01e"/></g><path d="M3 12q1-10 12.2-10.5q11.2.5 12.2 10.5q-5-3-12.2-3t-12.2 3z" fill="url(#orbh)"/></svg>
<!-- IE -->
<svg class="a" style="left:50px;top:535px" width="28" height="26" viewBox="0 0 28 26"><path d="M8.5 12.2H22.5" stroke="#5fd0f8" stroke-width="3.2"/><path d="M22.3 12 A7.2 7.2 0 1 0 20.5 16.8" stroke="#5fd0f8" stroke-width="4" fill="none"/><path d="M22.3 12 A7.2 7.2 0 1 0 20.5 16.8" stroke="#9eeafc" stroke-width="1.2" fill="none" opacity=".6"/><path d="M5 23 Q2 17 10 9.5 Q17 3.5 24 2.5 Q26.5 3 24.5 6" stroke="#f4c21c" stroke-width="2.2" fill="none" stroke-linecap="round"/></svg>
<!-- trumpet button -->
<div class="a" style="left:79px;top:533.5px;width:41px;height:27px;border:1px solid rgba(160,200,245,.6);border-radius:2px;background:linear-gradient(160deg,rgba(150,190,240,.75),rgba(80,140,220,.5) 60%,rgba(60,120,210,.4))"></div>
<svg class="a" style="left:86px;top:535px" width="26" height="24" viewBox="0 0 26 24"><path d="M4 4L22 20" stroke="#c89a1c" stroke-width="2"/><ellipse cx="11" cy="11" rx="4.5" ry="2.3" transform="rotate(40 11 11)" fill="none" stroke="#d8ae30" stroke-width="1.4"/><ellipse cx="3.8" cy="3.8" rx="3" ry="2.4" transform="rotate(45 3.8 3.8)" fill="#f2cc44" stroke="#a98214" stroke-width=".6"/><path d="M21 19l3.5 3" stroke="#3a3a3a" stroke-width="2"/></svg>
<!-- tray -->
<div class="t" style="left:773px;top:542px;font-size:9px;color:#e8f0fa">TR</div>
<svg class="a" style="left:796px;top:545px" width="6" height="4" viewBox="0 0 6 4"><path d="M0 3.5H6L3 0Z" fill="#fff"/></svg>
<svg class="a" style="left:809px;top:541px" width="12" height="12" viewBox="0 0 12 12"><path d="M1.5 1v10" stroke="#fff" stroke-width="1.2"/><path d="M2 1.5h4l1 1h4l-1.5 2.5 1.5 2.5H6l-1-1H2z" fill="#fff"/></svg>
<svg class="a" style="left:828px;top:541px" width="12" height="12" viewBox="0 0 12 12"><rect x="1" y="2" width="8" height="6" fill="none" stroke="#fff" stroke-width="1.2"/><rect x="3" y="5" width="8" height="6" fill="#1a55b6" stroke="#fff" stroke-width="1.2"/><path d="M0 2h2M9 9h3" stroke="#fff"/></svg>
<svg class="a" style="left:845px;top:541px" width="10" height="12" viewBox="0 0 10 12"><path d="M1 4h2.5l3.5-3v10L3.5 8H1z" fill="#fff"/><path d="M8.5 3q2 3 0 6" stroke="#fff" stroke-width="1" fill="none"/></svg>

</body></html>
